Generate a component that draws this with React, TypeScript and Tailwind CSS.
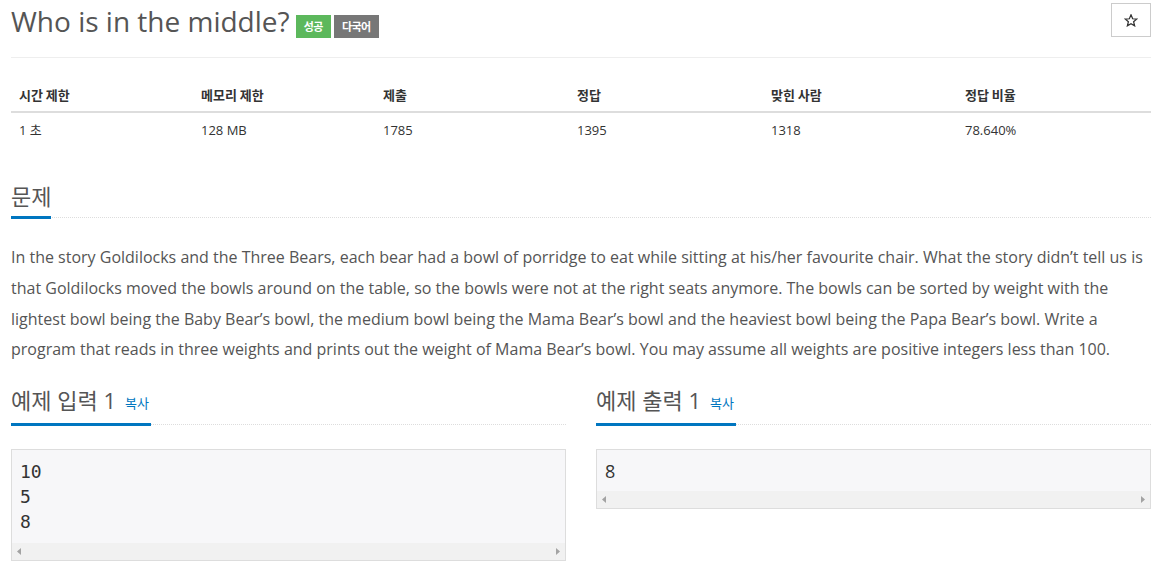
import React from "react";

const sans = "font-['Open_Sans','Noto_Sans_CJK_KR',sans-serif]";

const columns = [
  { head: "시간 제한", value: "1 초", w: "w-[182px]" },
  { head: "메모리 제한", value: "128 MB", w: "w-[182px]" },
  { head: "제출", value: "1785", w: "w-[194px]" },
  { head: "정답", value: "1395", w: "w-[194px]" },
  { head: "맞힌 사람", value: "1318", w: "w-[194px]" },
  { head: "정답 비율", value: "78.640%", w: "w-[194px]" },
];

const ScrollBar: React.FC = () => (
  <div className="h-[17px] bg-[#f1f1f1] flex items-center justify-between px-[5px]">
    <svg width="4" height="7" viewBox="0 0 4 7">
      <path d="M4 0 L0 3.5 L4 7 Z" fill="#a3a3a3" />
    </svg>
    <svg width="4" height="7" viewBox="0 0 4 7">
      <path d="M0 0 L4 3.5 L0 7 Z" fill="#a3a3a3" />
    </svg>
  </div>
);

const Headline: React.FC<{ title: string; copy?: boolean }> = ({ title, copy }) => (
  <div className="border-b border-dotted border-[#ddd]">
    <h2 className={`inline-block text-[22px] leading-[24px] pb-[8px] border-b-[3px] border-[#0076c0] -mb-[2px] text-[#555] ${copy ? "pr-[2px]" : ""}`}>
      {title}
      {copy && <span className="ml-[9px] text-[13px] text-[#0076c0] align-[1px]">복사</span>}
    </h2>
  </div>
);

const App: React.FC = () => {
  return (
    <div className={`min-h-screen w-full bg-white px-[11px] ${sans} text-[#555]`}>
      {/* TITLE */}
      <div className="pt-[5px] flex justify-between items-start">
        <div className="flex items-start">
          <h1 className="text-[28px] leading-[33px] text-[#555]">Who is in the middle?</h1>
          <span className="ml-[6px] mt-[10px] h-[23px] px-[8px] flex items-center bg-[#5cb85c] text-white text-[11px] tracking-[-0.5px] font-bold font-['Noto_Sans_CJK_KR',sans-serif]">
            성공
          </span>
          <span className="ml-[3px] mt-[10px] h-[23px] px-[8px] flex items-center bg-[#777] text-white text-[11px] tracking-[-0.5px] font-bold font-['Noto_Sans_CJK_KR',sans-serif]">
            다국어
          </span>
        </div>
        <button className="-mt-[2px] w-[40px] h-[34px] border border-[#ccc] bg-white flex items-center justify-center">
          <svg width="14" height="13" viewBox="0 0 24 23">
            <path
              d="M12 1.5 L14.9 8.4 L22.3 8.9 L16.6 13.6 L18.4 20.9 L12 17 L5.6 20.9 L7.4 13.6 L1.7 8.9 L9.1 8.4 Z"
              fill="none"
              stroke="#333"
              strokeWidth="2.2"
              strokeLinejoin="miter"
            />
          </svg>
        </button>
      </div>
      <div className="mt-[19px] border-t border-[#eee]" />

      {/* INFO TABLE */}
      <div className="mt-[19px] text-[13px] text-[#333]">
        <div className="flex border-b-2 border-[#ddd]">
          {columns.map((c) => (
            <div key={c.head} className={`${c.w} px-[8px] pt-[9px] pb-[7px] leading-[18px] font-bold font-['Noto_Sans_CJK_KR',sans-serif]`}>
              {c.head}
            </div>
          ))}
        </div>
        <div className="flex">
          {columns.map((c) => (
            <div key={c.head} className={`${c.w} px-[8px] pt-[8px] pb-[9px] leading-[18px]`}>
              {c.value}
            </div>
          ))}
        </div>
      </div>

      {/* PROBLEM */}
      <div className="mt-[36px]">
        <Headline title="문제" />
      </div>
      <p className="mt-[24px] text-[16px] leading-[30.8px] text-[#555]">
        In the story Goldilocks and the Three Bears, each bear had a bowl of porridge to eat while sitting at his/her favourite chair. What the story didn’t tell us is that Goldilocks moved the bowls around on the table, so the bowls were not at the right seats anymore. The bowls can be sorted by weight with the lightest bowl being the Baby Bear’s bowl, the medium bowl being the Mama Bear’s bowl and the heaviest bowl being the Papa Bear’s bowl. Write a program that reads in three weights and prints out the weight of Mama Bear’s bowl. You may assume all weights are positive integers less than 100.
      </p>

      {/* SAMPLES */}
      <div className="mt-[23px] grid grid-cols-2 gap-[30px] items-start">
        <div>
          <Headline title="예제 입력 1" copy />
          <div className="mt-[24px] border border-[#ddd] bg-[#f7f7f9]">
            <pre className="pt-[9px] pb-[9px] px-[8px] text-[18px] leading-[25px] text-[#333] font-['DejaVu_Sans_Mono',monospace]">
              {"10\n5\n8"}
            </pre>
            <ScrollBar />
          </div>
        </div>
        <div>
          <Headline title="예제 출력 1" copy />
          <div className="mt-[24px] border border-[#ddd] bg-[#f7f7f9]">
            <pre className="pt-[9px] pb-[7px] px-[8px] text-[18px] leading-[25px] text-[#333] font-['Open_Sans',sans-serif]">
              {"8"}
            </pre>
            <ScrollBar />
          </div>
        </div>
      </div>
    </div>
  );
};

export default App;
